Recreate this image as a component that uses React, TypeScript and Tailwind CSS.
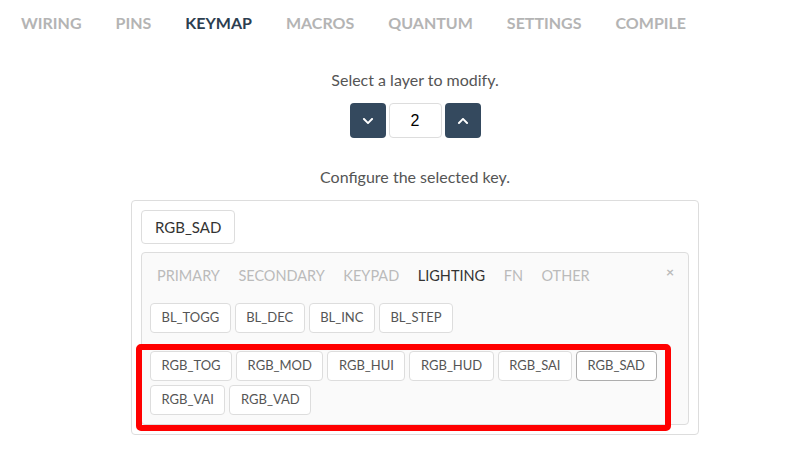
import React from "react";
import { FaChevronDown, FaChevronUp } from "react-icons/fa";

const navItems = ["WIRING", "PINS", "KEYMAP", "MACROS", "QUANTUM", "SETTINGS", "COMPILE"];
const tabs = ["PRIMARY", "SECONDARY", "KEYPAD", "LIGHTING", "FN", "OTHER"];
const blKeys = ["BL_TOGG", "BL_DEC", "BL_INC", "BL_STEP"];
const rgbKeys = ["RGB_TOG", "RGB_MOD", "RGB_HUI", "RGB_HUD", "RGB_SAI", "RGB_SAD", "RGB_VAI", "RGB_VAD"];

function Key({ label, selected }: { label: string; selected?: boolean }) {
  return (
    <div
      className={`h-[30px] px-[10.5px] flex items-center justify-center rounded-[4px] bg-white text-[13px] text-[#555] border ${
        selected ? "border-[#adadad]" : "border-[#ddd]"
      }`}
    >
      {label}
    </div>
  );
}

export default function App() {
  return (
    <div className="w-[811px] h-[457px] bg-white overflow-hidden" style={{ fontFamily: "Lato, 'Noto Sans', sans-serif" }}>
      <div className="flex items-center h-[46px] pl-[21px] gap-[34px]">
        {navItems.map((n) => (
          <div
            key={n}
            className={`text-[16px] font-bold ${n === "KEYMAP" ? "text-[#2c3e50]" : "text-[#b4b4b4]"}`}
          >
            {n}
          </div>
        ))}
      </div>
      <div className="ml-[131px] w-[568px] flex flex-col items-center">
        <div className="mt-[22px] text-[16px] text-[#555] leading-[24px]">Select a layer to modify.</div>
        <div className="mt-[11px] flex gap-[3px]">
          <div className="w-[36px] h-[35px] rounded-[4px] bg-[#34495e] flex items-center justify-center text-white">
            <FaChevronDown size={12} />
          </div>
          <div
            className="w-[53px] h-[35px] rounded-[4px] border border-[#ddd] flex items-center justify-center text-[16px] text-black"
            style={{ fontFamily: "'Liberation Sans', Arial, sans-serif" }}
          >
            2
          </div>
          <div className="w-[36px] h-[35px] rounded-[4px] bg-[#34495e] flex items-center justify-center text-white">
            <FaChevronUp size={12} />
          </div>
        </div>
        <div className="mt-[27px] text-[16px] text-[#555] leading-[24px]">Configure the selected key.</div>
        <div className="mt-[11px] w-[568px] h-[235px] border border-[#ddd] rounded-[4px] p-[9px] flex flex-col">
          <div className="self-start h-[34px] px-[13px] flex items-center rounded-[4px] border border-[#ddd] bg-white text-[15px] text-[#333]">
            RGB_SAD
          </div>
          <div className="relative mt-[8px] flex-1 border border-[#ddd] rounded-[4px] bg-[#fafafa] px-[8px]">
            <div className="flex items-center h-[44px] pt-[2px] pl-[7px] gap-[18.5px] text-[14.5px]">
              {tabs.map((t) => (
                <div key={t} className={t === "LIGHTING" ? "text-[#333]" : "text-[#bbb]"}>
                  {t}
                </div>
              ))}
            </div>
            <div className="absolute right-[14px] top-[12px] text-[#bbb] text-[14px] font-bold leading-none">×</div>
            <div className="mt-[6px] flex flex-wrap gap-[4px]">
              {blKeys.map((k) => (
                <Key key={k} label={k} />
              ))}
            </div>
            <div className="mt-[18px] flex flex-wrap gap-[4px] w-[520px]">
              {rgbKeys.map((k) => (
                <Key key={k} label={k} selected={k === "RGB_SAD"} />
              ))}
            </div>
            <div className="absolute left-[-6px] top-[91px] w-[535px] h-[87px] border-[6px] border-[#ff0000] rounded-[5px] pointer-events-none" />
          </div>
        </div>
      </div>
    </div>
  );
}
